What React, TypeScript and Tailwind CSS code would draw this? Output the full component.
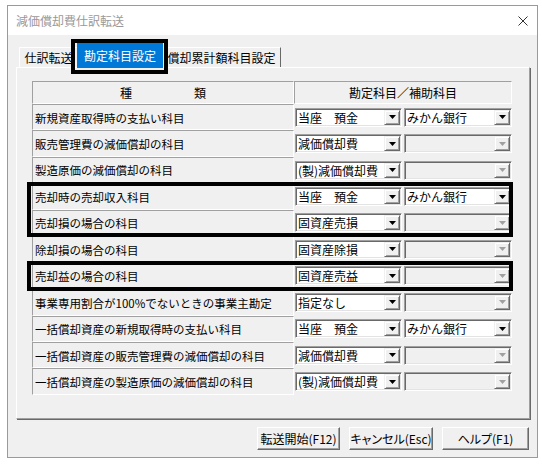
const rows = [
  { label: "新規資産取得時の支払い科目", main: "当座　預金", sub: "みかん銀行" },
  { label: "販売管理費の減価償却の科目", main: "減価償却費", sub: "" },
  { label: "製造原価の減価償却の科目", main: "(製)減価償却費", sub: "" },
  { label: "売却時の売却収入科目", main: "当座　預金", sub: "みかん銀行" },
  { label: "売却損の場合の科目", main: "固資産売損", sub: "" },
  { label: "除却損の場合の科目", main: "固資産除損", sub: "" },
  { label: "売却益の場合の科目", main: "固資産売益", sub: "" },
  { label: "事業専用割合が100%でないときの事業主勘定", main: "指定なし", sub: "" },
  { label: "一括償却資産の新規取得時の支払い科目", main: "当座　預金", sub: "みかん銀行" },
  { label: "一括償却資産の販売管理費の減価償却の科目", main: "減価償却費", sub: "" },
  { label: "一括償却資産の製造原価の減価償却の科目", main: "(製)減価償却費", sub: "" },
];

type RowData = (typeof rows)[number];

function Combo({ value, disabled, wide }: { value: string; disabled?: boolean; wide?: boolean }) {
  return (
    <div
      className={`h-[19px] ${wide ? "w-[108px]" : "w-[107px]"} p-[1px] border border-t-[#a0a0a0] border-l-[#a0a0a0] border-r-white border-b-white shadow-[inset_1px_1px_0_#696969,inset_-1px_-1px_0_#e3e3e3] ${
        disabled ? "bg-[#f0f0f0]" : "bg-white"
      }`}
    >
      <div className="flex h-full items-center">
        <span className="flex-1 whitespace-nowrap pl-[1px] text-[12px] leading-[15px]">{value}</span>
        <div className="flex h-full w-[16px] items-center justify-center border border-t-[#f0f0f0] border-l-[#f0f0f0] border-r-[#696969] border-b-[#696969] bg-[#f0f0f0] shadow-[inset_1px_1px_0_#fff,inset_-1px_-1px_0_#a0a0a0]">
          <svg width="7" height="4" viewBox="0 0 7 4">
            <path d="M0 0h7L3.5 4z" fill={disabled ? "#a0a0a0" : "#000"} />
          </svg>
        </div>
      </div>
    </div>
  );
}

function Row({ row }: { row: RowData }) {
  return (
    <div className="flex h-[26.45px]">
      <div className="flex w-[262px] items-center border border-t-[#a0a0a0] border-l-[#a0a0a0] border-r-white border-b-white pl-[2px] pt-[2px] text-[11.5px]">
        {row.label}
      </div>
      <div className="flex flex-1 items-center gap-[2px] pl-[1px]">
        <Combo value={row.main} />
        <Combo value={row.sub} disabled={!row.sub} wide />
      </div>
    </div>
  );
}

function Mark({ className }: { className: string }) {
  return <div className={`pointer-events-none absolute border-4 border-black ${className}`} />;
}

export default function App() {
  return (
    <div className="h-[465px] w-[542px] overflow-hidden bg-white pl-[7px] pt-[5px] font-['Noto_Sans_CJK_JP',sans-serif] text-black">
      <div className="flex h-[453px] w-[531px] flex-col border border-[#9a9a9a] bg-[#f0f0f0]">
        {/* title bar */}
        <div className="flex h-[29px] items-center justify-between bg-white pl-[8px] pr-[8px]">
          <span className="text-[12px] text-[#999]">減価償却費仕訳転送</span>
          <svg width="10" height="10" viewBox="0 0 10 10" className="mr-[1px]">
            <path d="M0.5 0.5l9 9M9.5 0.5l-9 9" stroke="#333" strokeWidth="1" />
          </svg>
        </div>

        <div className="px-[8px]">
          {/* tabs */}
          <div className="flex h-[32px] items-end pl-[3px] text-[12px]">
            <div className="flex h-[20px] w-[58px] items-center justify-center border-t border-l border-t-white border-l-white">
              仕訳転送
            </div>
            <div className="relative z-10 -mb-[1px] flex h-[25px] w-[86px] items-center justify-center bg-[#0078d7] text-white">
              勘定科目設定
              <Mark className="-top-[4px] -bottom-[6px] -left-[6px] -right-[5px]" />
            </div>
            <div className="flex h-[20px] w-[118px] items-center justify-center border-t border-r border-t-white border-r-[#696969]">
              償却累計額科目設定
            </div>
          </div>

          {/* panel */}
          <div className="h-[352px] w-[514px] border border-t-white border-l-white border-r-[#a0a0a0] border-b-[#a0a0a0] pl-[15px] pt-[13px] shadow-[1px_1px_0_#696969]">
            <div className="w-[480px]">
              <div className="flex h-[23px] text-[12px]">
                <div className="flex w-[262px] items-center justify-center gap-[62px] border border-t-[#a0a0a0] border-l-[#a0a0a0] border-r-white border-b-white">
                  <span>種</span>
                  <span>類</span>
                </div>
                <div className="flex flex-1 items-center justify-center border border-t-[#a0a0a0] border-l-[#a0a0a0] border-r-white border-b-white">
                  勘定科目／補助科目
                </div>
              </div>

              {rows.slice(0, 3).map((r) => (
                <Row key={r.label} row={r} />
              ))}
              <div className="relative">
                {rows.slice(3, 5).map((r) => (
                  <Row key={r.label} row={r} />
                ))}
                <Mark className="-top-[1px] -bottom-[1px] -left-[5px] -right-[1px]" />
              </div>
              <Row row={rows[5]} />
              <div className="relative">
                <Row row={rows[6]} />
                <Mark className="-top-[2px] -bottom-[2px] -left-[5px] -right-[1px]" />
              </div>
              {rows.slice(7).map((r) => (
                <Row key={r.label} row={r} />
              ))}
            </div>
          </div>

          {/* buttons */}
          <div className="mt-[8px] flex justify-end gap-[9px] text-[12px] [font-feature-settings:'palt']">
            {[
              ["転送開始(F12)", "w-[83px]"],
              ["キャンセル(Esc)", "w-[84px]"],
              ["ヘルプ(F1)", "w-[87px]"],
            ].map(([t, w]) => (
              <button
                key={t}
                className={`${w} flex h-[23px] items-center justify-center whitespace-nowrap border border-t-white border-l-white border-r-[#696969] border-b-[#696969] bg-[#f0f0f0] shadow-[inset_-1px_-1px_0_#a0a0a0]`}
              >
                {t}
              </button>
            ))}
          </div>
        </div>
      </div>
    </div>
  );
}
